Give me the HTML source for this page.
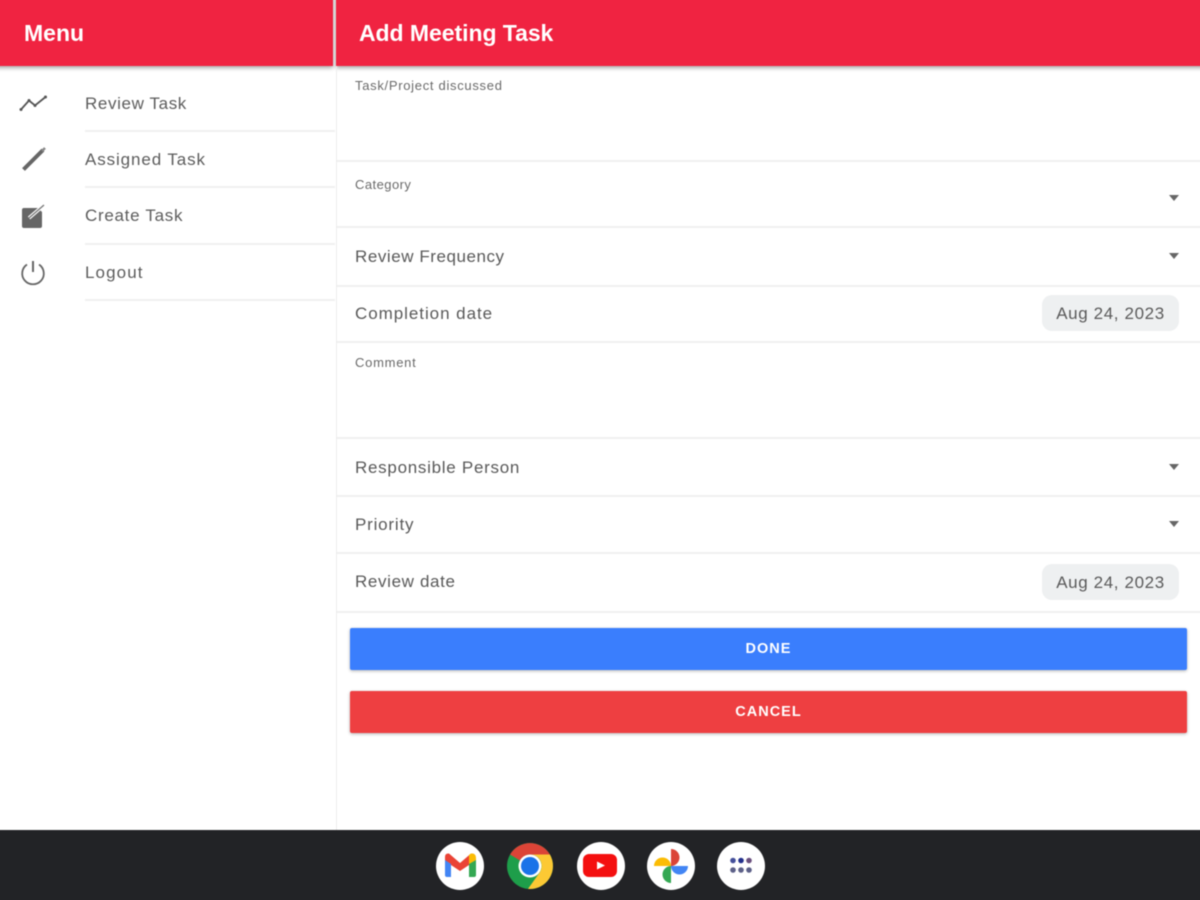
<!DOCTYPE html>
<html><head><meta charset="utf-8"><style>
*{box-sizing:border-box}
html,body{margin:0;padding:0;background:#fff;width:1200px;height:900px;overflow:hidden}
body{position:relative;font-family:"Liberation Sans",sans-serif;color:#555}
#o{position:absolute;left:0;top:0;width:1200px;height:900px;overflow:hidden;contain:paint}
#w{position:absolute;left:0;top:0;width:1200px;height:900px;filter:blur(.45px)}
.a{position:absolute;white-space:nowrap}
.h{background:#f02341;top:-10px;height:76px;box-shadow:0 2px 4px rgba(0,0,0,.35)}
.t{color:#fff;font-weight:700;font-size:23px;line-height:26px}
.l{height:2px;background:#f0f0f0}
.m{font-size:17px;line-height:20px;color:#5c5c5c}
.f{font-size:17px;line-height:20px;color:#595959;left:355px}
.s{font-size:13px;line-height:14px;color:#6a6a6a;left:355px}
.d{left:1042px;width:137px;height:36px;background:#eef0f1;border-radius:10px;text-align:center;line-height:37px;font-size:17px;color:#5a5a5a;letter-spacing:.62px}
.c{left:1169px;width:0;height:0;border-left:5.5px solid transparent;border-right:5.5px solid transparent;border-top:6px solid #666}
.b{left:350px;width:837px;height:42px;border-radius:2px;color:#fff;font-weight:700;font-size:14.5px;text-align:center;line-height:42px;letter-spacing:1px;box-shadow:0 1px 3px rgba(0,0,0,.3)}
.o{width:48px;height:48px;border-radius:50%;background:#fff;top:842px}
</style></head><body><div id="o"><div id="w">
<div class="a h" style="left:-10px;width:343px"></div>
<div class="a h" style="left:336px;width:880px"></div>
<div class="a t" style="left:24px;top:20px">Menu</div>
<div class="a t" style="left:359px;top:20px;letter-spacing:-.05px">Add Meeting Task</div>
<div class="a" style="left:336px;top:66px;width:1px;height:764px;background:#ececec"></div>

<svg class="a" style="left:18px;top:90px" width="32" height="26" viewBox="0 0 32 26"><path d="M3 19.500L11 10.500L17 15.500L27.500 7" fill="none" stroke="#555" stroke-width="1.800"/><circle cx="3" cy="19.500" r="1.500" fill="#555"/><circle cx="11" cy="10.500" r="1.500" fill="#555"/><circle cx="17" cy="15.500" r="1.500" fill="#555"/><circle cx="27.500" cy="7" r="1.500" fill="#555"/></svg>
<svg class="a" style="left:18px;top:145px" width="32" height="30" viewBox="0 0 32 30"><path d="M5.500 24.500L25 5" stroke="#666" stroke-width="4"/><path d="M24 6L27 3" stroke="#888" stroke-width="2.500"/></svg>
<svg class="a" style="left:18px;top:202px" width="32" height="30" viewBox="0 0 32 30"><path d="M6 6H20L24 10V24Q24 26 22 26H6Q4 26 4 24V8Q4 6 6 6Z" fill="#666"/><path d="M11 16L26 3" stroke="#fff" stroke-width="3.500"/><path d="M11 16L26 3" stroke="#777" stroke-width="1.300"/></svg>
<svg class="a" style="left:17px;top:258px" width="32" height="30" viewBox="0 0 32 30"><path d="M10 6.500A10.800 10.800 0 1 0 22 6.500" fill="none" stroke="#666" stroke-width="1.800"/><path d="M16 3V14" stroke="#666" stroke-width="2"/></svg>

<div class="a m" style="left:85px;top:94px;letter-spacing:.62px">Review Task</div>
<div class="a m" style="left:85px;top:150px;letter-spacing:.89px">Assigned Task</div>
<div class="a m" style="left:85px;top:206px;letter-spacing:.71px">Create Task</div>
<div class="a m" style="left:85px;top:263px;letter-spacing:1.1px">Logout</div>
<div class="a l" style="left:85px;top:130px;width:250px"></div>
<div class="a l" style="left:85px;top:186px;width:250px"></div>
<div class="a l" style="left:85px;top:243px;width:250px"></div>
<div class="a l" style="left:85px;top:299px;width:250px"></div>

<div class="a s" style="top:79px;letter-spacing:.7px">Task/Project discussed</div>
<div class="a l" style="left:337px;top:160px;width:880px"></div>
<div class="a s" style="top:178px;letter-spacing:.45px">Category</div>
<div class="a c" style="top:195px"></div>
<div class="a l" style="left:337px;top:226px;width:880px"></div>
<div class="a f" style="top:247px;letter-spacing:.55px">Review Frequency</div>
<div class="a c" style="top:253px"></div>
<div class="a l" style="left:337px;top:285px;width:880px"></div>
<div class="a f" style="top:304px;letter-spacing:.95px">Completion date</div>
<div class="a d" style="top:295px">Aug 24, 2023</div>
<div class="a l" style="left:337px;top:341px;width:880px"></div>
<div class="a s" style="top:356px;letter-spacing:.73px">Comment</div>
<div class="a l" style="left:337px;top:437px;width:880px"></div>
<div class="a f" style="top:458px;letter-spacing:.72px">Responsible Person</div>
<div class="a c" style="top:464px"></div>
<div class="a l" style="left:337px;top:495px;width:880px"></div>
<div class="a f" style="top:515px;letter-spacing:.8px">Priority</div>
<div class="a c" style="top:521px"></div>
<div class="a l" style="left:337px;top:552px;width:880px"></div>
<div class="a f" style="top:572px;letter-spacing:.64px">Review date</div>
<div class="a d" style="top:564px">Aug 24, 2023</div>
<div class="a l" style="left:337px;top:611px;width:880px"></div>

<div class="a b" style="top:628px;background:#3a7efd">DONE</div>
<div class="a b" style="top:691px;background:#ee3f41">CANCEL</div>

<div class="a" style="left:-10px;top:830px;width:1220px;height:80px;background:#222326"></div>

<div class="a o" style="left:436px"></div>
<svg class="a" style="left:436px;top:842px" width="48" height="48" viewBox="0 0 48 48">
<path d="M9 15Q9 11 13 11.500L24 21L35 11.500Q39 11 39 15V19L24 29L9 19Z" fill="#ea4335"/>
<path d="M33 13L35 11.500Q40 11 40 16V20L33 24Z" fill="#fbbc04"/>
<path d="M9 18L15 22V35H11Q9 35 9 33Z" fill="#4285f4"/>
<path d="M33 22L40 18V33Q40 35 38 35H33Z" fill="#34a853"/></svg>

<svg class="a" style="left:506px;top:842px" width="48" height="48" viewBox="0 0 48 48">
<circle cx="24" cy="24" r="23" fill="#1e9e4a"/>
<path d="M4.100 12.500A23 23 0 0 1 43.900 12.500H24A11.500 11.500 0 0 0 14 18.500Z" fill="#db4437"/>
<path d="M43.900 12.500A23 23 0 0 1 22 46.900L34 30A11.500 11.500 0 0 0 24 12.500Z" fill="#fcc934"/>
<circle cx="24" cy="24" r="11.500" fill="#fff"/><circle cx="24" cy="24" r="9" fill="#1a73e8"/></svg>

<div class="a o" style="left:577px"></div>
<svg class="a" style="left:577px;top:842px" width="48" height="48" viewBox="0 0 48 48">
<rect x="6" y="12" width="34" height="23" rx="6" fill="#f40f0f"/><path d="M20 19.500L28 23.500L20 27.500Z" fill="#fff"/></svg>

<div class="a o" style="left:647px"></div>
<svg class="a" style="left:647px;top:842px" width="48" height="48" viewBox="0 0 48 48">
<path d="M24 24V7A8.500 8.500 0 0 1 24 24Z" fill="#db4437"/>
<path d="M24 24H41A8.500 8.500 0 0 1 24 24Z" fill="#4285f4"/>
<path d="M24 24V41A8.500 8.500 0 0 1 24 24Z" fill="#34a853"/>
<path d="M24 24H7A8.500 8.500 0 0 1 24 24Z" fill="#fbbc04"/></svg>

<div class="a o" style="left:717px"></div>
<svg class="a" style="left:717px;top:842px" width="48" height="48" viewBox="0 0 48 48">
<g fill="#5c6088"><circle cx="16" cy="18.500" r="2.800" fill="#444f9a"/><circle cx="24" cy="18.500" r="2.800" fill="#23308c"/><circle cx="32" cy="18.500" r="2.800" fill="#6a4f7e"/><circle cx="16" cy="28" r="2.800"/><circle cx="24" cy="28" r="2.800"/><circle cx="32" cy="28" r="2.800"/></g></svg>
</div></div></body></html>
